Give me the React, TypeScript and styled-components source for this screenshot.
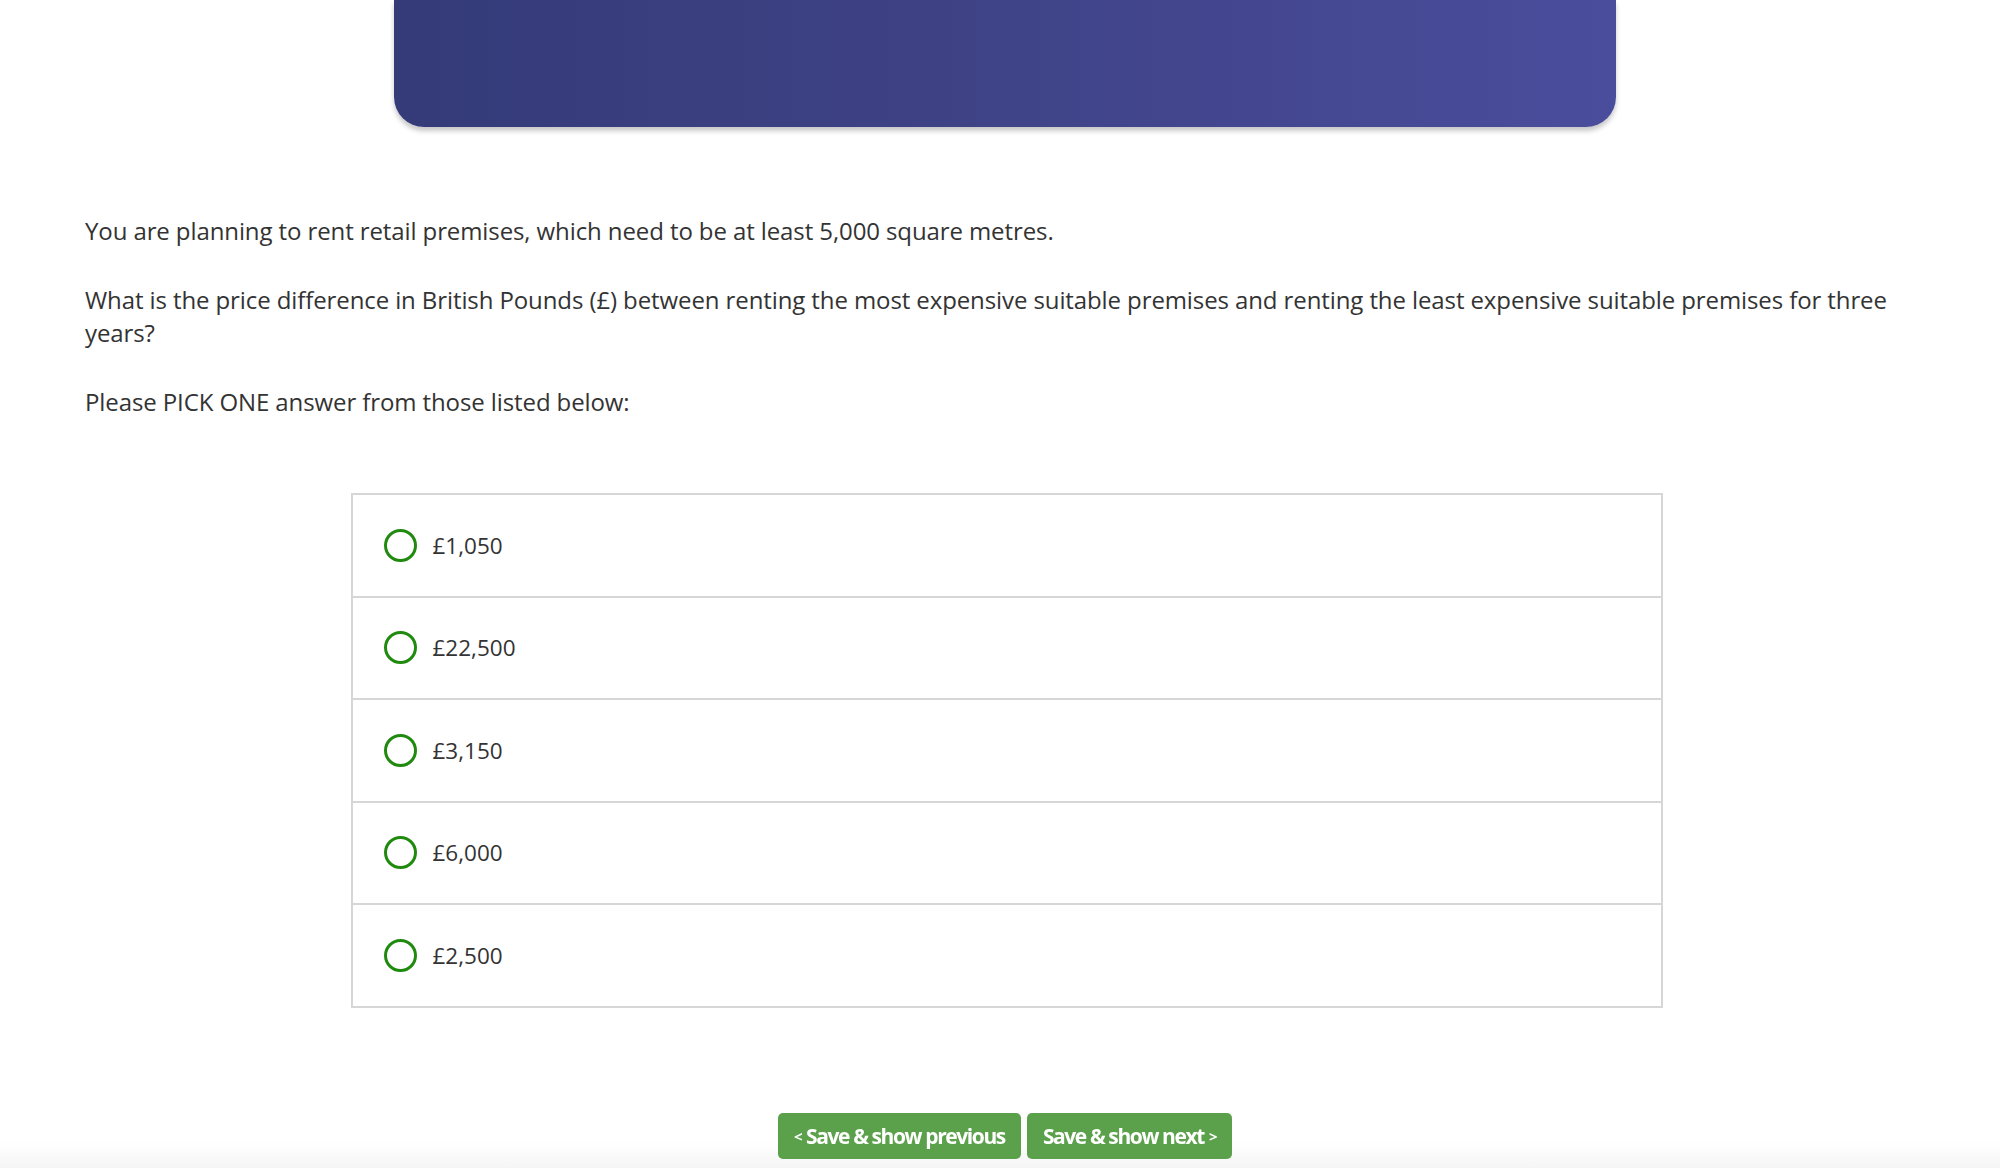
import React from "react";
import styled, { createGlobalStyle } from "styled-components";

const GlobalStyle = createGlobalStyle`
  html, body {
    margin: 0;
    padding: 0;
    background: #ffffff;
  }
  body {
    font-family: "Open Sans", "Noto Sans", Arial, sans-serif;
    color: #333333;
  }
  * { box-sizing: border-box; }
`;

const Page = styled.div`
  min-height: 1168px;
  padding: 0 75px 0 85px;
  display: flex;
  flex-direction: column;
`;

const Banner = styled.div`
  align-self: center;
  width: 1222px;
  height: 127px;
  border-radius: 0 0 30px 30px;
  background: linear-gradient(90deg, #343b78 0%, #3f4387 50%, #4a4d9c 100%);
  box-shadow: 0 4px 5px rgba(0, 0, 0, 0.22);
`;

const Question = styled.div`
  margin-top: 87px;
  display: flex;
  flex-direction: column;
  gap: 36px;
`;

const Para = styled.p`
  margin: 0;
  font-size: 24px;
  line-height: 33px;
  letter-spacing: -0.1px;
  color: #333333;
`;

const Options = styled.div`
  align-self: center;
  margin: 75px 0 0 3px;
  width: 1312px;
  border: 2px solid #d6d6d6;
  display: flex;
  flex-direction: column;
`;

const Option = styled.label<{ $first?: boolean }>`
  box-sizing: content-box;
  height: 100.5px;
  display: flex;
  align-items: center;
  gap: 16px;
  padding-left: 31px;
  border-top: ${(p) => (p.$first ? "none" : "2px solid #d6d6d6")};
  cursor: pointer;
  background: #ffffff;
`;

const Radio = styled.span`
  width: 33px;
  height: 33px;
  border-radius: 50%;
  border: 3px solid #208a0f;
  flex-shrink: 0;
`;

const OptionText = styled.span`
  font-size: 22.5px;
  color: #333333;
`;

const Nav = styled.div`
  align-self: center;
  margin-top: 105px;
  display: flex;
  gap: 6px;
  position: relative;
  z-index: 1;
`;

const NavButton = styled.button`
  height: 46px;
  padding: 0 16px;
  border: none;
  border-radius: 5px;
  background: #5ba14b;
  color: #ffffff;
  font-family: "Open Sans", "Noto Sans", Arial, sans-serif;
  font-weight: 700;
  font-size: 21px;
  letter-spacing: -1.4px;
  cursor: pointer;
  display: flex;
  align-items: center;
  gap: 5px;
`;

const Chev = styled.span`
  font-size: 15px;
  font-weight: 700;
`;

const BottomFade = styled.div`
  position: fixed;
  left: 0;
  right: 0;
  bottom: 0;
  height: 26px;
  background: linear-gradient(180deg, rgba(245, 245, 245, 0) 0%, #f5f5f5 100%);
  pointer-events: none;
`;

const answers = ["£1,050", "£22,500", "£3,150", "£6,000", "£2,500"];

export default function App() {
  return (
    <>
      <GlobalStyle />
      <Page>
        <Banner />
        <Question>
          <Para>You are planning to rent retail premises, which need to be at least 5,000 square metres.</Para>
          <Para>
            What is the price difference in British Pounds (£) between renting the most expensive suitable premises and renting the least expensive suitable premises for three years?
          </Para>
          <Para>Please PICK ONE answer from those listed below:</Para>
        </Question>
        <Options>
          {answers.map((a, i) => (
            <Option key={a} $first={i === 0}>
              <Radio />
              <OptionText>{a}</OptionText>
            </Option>
          ))}
        </Options>
        <Nav>
          <NavButton>
            <Chev>&lt;</Chev>Save &amp; show previous
          </NavButton>
          <NavButton>
            Save &amp; show next<Chev>&gt;</Chev>
          </NavButton>
        </Nav>
      </Page>
      <BottomFade />
    </>
  );
}
